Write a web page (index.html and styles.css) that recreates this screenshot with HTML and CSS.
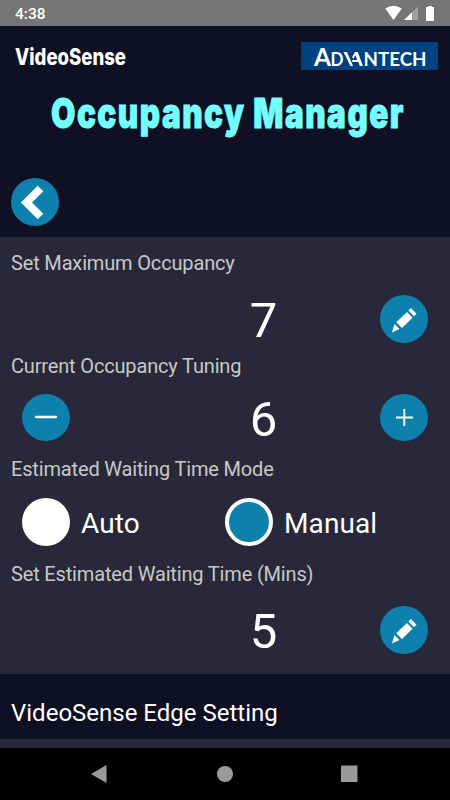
FILE: index.html
```
<!DOCTYPE html>
<html lang="en">
<head>
<meta charset="utf-8">
<title>Occupancy Manager</title>
<link rel="stylesheet" href="styles.css">
</head>
<body>
<div class="status">
  <span class="time">4:38</span>
  <svg class="status-icons" width="52" height="26" viewBox="0 0 52 26">
    <path fill="#fff" d="M.2 8.5Q8.500 3 16.800 8.500L8.500 20z"/>
    <path fill="#9f9f9f" d="M33 6.500V20H19z"/>
    <path fill="#fff" d="M27 12.300V20H19z"/>
    <path fill="#fff" d="M43 7V6h4v1h2v14h-8V7z"/>
  </svg>
</div>
<header class="header">
  <div class="brands">
    <svg class="brand" width="120" height="32"><text x="0" y="24" textLength="111" lengthAdjust="spacingAndGlyphs">VideoSense</text></svg>
    <svg class="advantech" width="137" height="28">
      <text class="big" x="13" y="24" textLength="17" lengthAdjust="spacingAndGlyphs">A</text>
      <text x="29.500" y="24" textLength="13" lengthAdjust="spacingAndGlyphs">D</text>
      <path d="M42.500 10h3.500L52 24h-2.500z"/>
      <path d="M54 10h2.800L62 24h-3.200l-1.500-4h-5.600l-.9-2h5.500l-2-4.800-2 3.600-1.200-1.500z"/>
      <text x="62.500" y="24" textLength="63" lengthAdjust="spacingAndGlyphs">NTECH</text>
    </svg>
  </div>
  <svg class="title" width="450" height="64"><text x="51" y="44" textLength="354" lengthAdjust="spacingAndGlyphs">Occupancy Manager</text></svg>
  <button class="round back" aria-label="Back"><svg width="48" height="48"><path d="M29.500 10.500L15.500 24.500 29.500 38.500" transform="translate(10 0)" fill="none" stroke="#fff" stroke-width="8"/></svg></button>
</header>
<main class="settings">
  <h2 class="label">Set Maximum Occupancy</h2>
  <div class="row r1"><span></span><span class="value">7</span>
    <button class="round" aria-label="Edit"><svg width="48" height="48"><path fill="#fff" d="M31 13L36.500 18.800l-2.600 2.400-5.500-5.800zM27 17l5.500 5.800L22 33l-5.800-5.800zM14.500 29l5 5-7.500 3.500z"/></svg></button></div>
  <h2 class="label">Current Occupancy Tuning</h2>
  <div class="row"><button class="round flat" aria-label="Decrease"><svg width="48" height="47"><path stroke="#fff" stroke-width="2.300" stroke-linecap="round" d="M14 23h20"/></svg></button><span class="value">6</span>
    <button class="round flat" aria-label="Increase"><svg width="48" height="47"><path stroke="#fff" stroke-width="1.800" d="M16 23.500h17M24.300 15v17"/></svg></button></div>
  <h2 class="label">Estimated Waiting Time Mode</h2>
  <div class="row r3">
    <label class="option"><span class="radio"></span><span class="name">Auto</span></label>
    <label class="option"><span class="radio on"></span><span class="name">Manual</span></label>
  </div>
  <h2 class="label">Set Estimated Waiting Time (Mins)</h2>
  <div class="row r1"><span></span><span class="value">5</span>
    <button class="round" aria-label="Edit"><svg width="48" height="48"><path fill="#fff" d="M31 13L36.500 18.800l-2.600 2.400-5.500-5.800zM27 17l5.500 5.800L22 33l-5.800-5.800zM14.500 29l5 5-7.500 3.500z"/></svg></button></div>
</main>
<section class="edge">VideoSense Edge Setting</section>
<div class="strip"></div>
<nav class="nav"><svg width="450" height="52" fill="#9a9a9a"><path d="M106.500 17v18L91 26z"/><circle cx="225" cy="26" r="8"/><rect x="341" y="17.500" width="16.500" height="16.500" rx=".5"/></svg></nav>
</body>
</html>
```
FILE: styles.css
```
* { box-sizing: border-box; }
body { margin: 0; width: 450px; height: 800px; overflow: hidden; background: #101024; color: #fff; font-family: Roboto, sans-serif; }
svg { display: block; overflow: visible; }
.status { height: 26px; background: #757575; display: flex; justify-content: space-between; padding: 0 13px 0 15px; }
.time { font-size: 15.500px; font-weight: 500; line-height: 28px; }
.header { height: 211px; }
.brands { height: 53px; display: flex; justify-content: space-between; align-items: flex-start; padding: 15px 12px 0 15px; }
.brand text { font: 800 23px Inter, sans-serif; fill: #fff; }
.advantech { background: #004280; margin-top: 1px; fill: #fff; }
.advantech text { font: 700 19.500px Lato, sans-serif; }
.advantech .big { font-size: 25px; }
.title { margin-top: 5px; }
.title text { font: 900 41.500px Inter, sans-serif; letter-spacing: 2px; fill: #73ffff; stroke: #73ffff; stroke-width: .9; }
.round { width: 48px; height: 48px; border: 0; border-radius: 50%; padding: 0; background: #0e80ad; }
.flat { height: 47px; }
.back { display: block; margin: 30px 0 0 11px; }
.back svg { margin-left: -10px; }
.settings { height: 437px; background: #28283a; padding: 14px 22px 0 11px; }
.label { margin: 0; font-size: 20px; line-height: 24px; height: 24px; font-weight: 400; letter-spacing: -.16px; color: #c8c8c6; white-space: nowrap; }
.row { display: grid; grid-template-columns: 48px 1fr 48px; align-items: center; padding-left: 11px; height: 79px; }
.value { font-size: 49px; line-height: 48px; text-align: center; padding: 4px 0 0 77px; }
.r1 { padding-top: 9px; }
.r3 { display: flex; height: 81px; }
.option { display: flex; align-items: center; gap: 11px; width: 203px; font-size: 28px; letter-spacing: .1px; }
.name { padding-top: 3px; }
.radio { width: 48px; height: 48px; border-radius: 50%; background: #fff; }
.on { background: #0e80ad; border: 4px solid #fff; }
.edge { height: 65px; padding: 25px 11px 0; font-size: 24px; line-height: 28px; }
.strip { height: 9px; background: #28283a; }
.nav { height: 52px; background: #000; }
```
